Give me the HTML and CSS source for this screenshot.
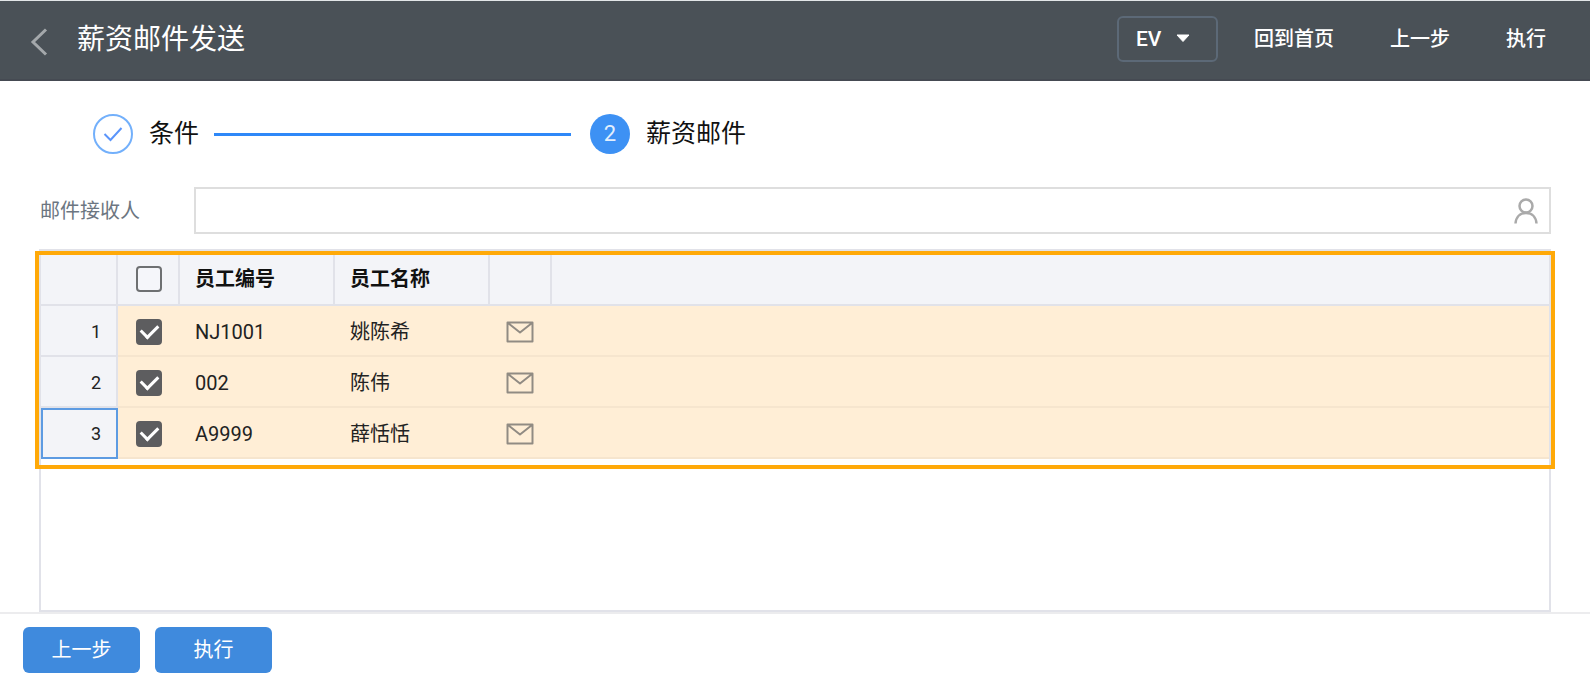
FILE: index.html
```html
<!DOCTYPE html>
<html lang="zh-CN">
<head>
<meta charset="utf-8">
<meta name="viewport" content="width=device-width, initial-scale=1">
<title>薪资邮件发送</title>
<link rel="stylesheet" href="styles.css">
</head>
<body>
<svg class="sprite" aria-hidden="true">
  <symbol id="mail" viewBox="0 0 28 22"><path d="M1.500 1.500h25v19h-25zM2 2l12 9.500L26 2" fill="none" stroke="currentColor" stroke-width="2" stroke-linejoin="round"/></symbol>
</svg>
<header class="topbar">
  <button class="back" type="button" aria-label="返回">
    <svg width="18" height="28" viewBox="0 0 18 28"><path d="M16 1.500 3 14l13 12.500" fill="none" stroke="currentColor" stroke-width="3"/></svg>
  </button>
  <h1 class="title">薪资邮件发送</h1>
  <button class="env" type="button">EV
    <svg width="14" height="9" viewBox="0 0 14 9"><path d="M1 1h12L7 7.500z" fill="currentColor" stroke="currentColor" stroke-linejoin="round"/></svg>
  </button>
  <nav class="actions">
    <a href="#">回到首页</a>
    <a href="#">上一步</a>
    <a href="#">执行</a>
  </nav>
</header>
<main class="content">
  <ol class="steps">
    <li class="step">
      <span class="dot done"><svg width="20" height="16" viewBox="0 0 20 16"><path d="M1.500 8 7.500 14 18.500 2" fill="none" stroke="currentColor" stroke-width="2"/></svg></span>
      <span>条件</span>
    </li>
    <li class="line" aria-hidden="true"></li>
    <li class="step">
      <span class="dot current">2</span>
      <span>薪资邮件</span>
    </li>
  </ol>
  <div class="field">
    <label for="receiver">邮件接收人</label>
    <div class="picker">
      <input id="receiver" type="text">
      <svg class="person" width="24" height="26" viewBox="0 0 24 26"><g fill="none" stroke="currentColor" stroke-width="2.500"><circle cx="12" cy="8" r="6.500"/><path d="M1.500 25.500C2 19 6 15 12 15s10 4 10.500 10.500"/></g></svg>
    </div>
  </div>
  <div class="grid">
    <table>
      <colgroup><col class="c-num"><col class="c-small"><col class="c-text"><col class="c-text"><col class="c-small"><col></colgroup>
      <thead>
        <tr><th></th><th class="pick"><input type="checkbox" aria-label="全选"></th><th>员工编号</th><th>员工名称</th><th></th><th></th></tr>
      </thead>
      <tbody>
        <tr><td class="num">1</td><td class="pick"><input type="checkbox" aria-label="选择 1" checked></td><td>NJ1001</td><td>姚陈希</td><td><svg class="mail"><use href="#mail"/></svg></td><td></td></tr>
        <tr><td class="num">2</td><td class="pick"><input type="checkbox" aria-label="选择 2" checked></td><td>002</td><td>陈伟</td><td><svg class="mail"><use href="#mail"/></svg></td><td></td></tr>
        <tr><td class="num focused">3</td><td class="pick"><input type="checkbox" aria-label="选择 3" checked></td><td>A9999</td><td>薛恬恬</td><td><svg class="mail"><use href="#mail"/></svg></td><td></td></tr>
      </tbody>
    </table>
    <div class="highlight"></div>
  </div>
</main>
<footer class="footer">
  <button type="button">上一步</button>
  <button type="button">执行</button>
</footer>
</body>
</html>
```

FILE: styles.css
```css
* { box-sizing: border-box; }

body {
  margin: 0;
  min-height: 100vh;
  display: flex;
  flex-direction: column;
  background: #fff;
  color: #222;
  font: 20px/28px Roboto, "Noto Sans CJK SC", sans-serif;
}

button, input { font: inherit; }
button { cursor: pointer; }
.sprite { display: none; }

.topbar {
  display: flex;
  align-items: center;
  height: 81px;
  padding: 0 44px 3px 30px;
  background: #4a5157;
  border-top: 1px solid #e2e6e8;
  border-bottom: 2px solid #454a52;
  color: #fff;
}

.back {
  display: flex;
  margin-top: 6px;
  padding: 0;
  border: 0;
  background: none;
  color: #a4a8ab;
}

.title {
  margin: 0 auto 0 29px;
  padding-top: 3px;
  font-size: 28px;
  line-height: 40px;
  font-weight: 400;
}

.env {
  display: flex;
  align-items: center;
  gap: 15px;
  width: 101px;
  height: 46px;
  padding: 0 0 0 17px;
  border: 2px solid #5c6977;
  border-radius: 6px;
  background: none;
  color: #fff;
  font-size: 21px;
  font-weight: 500;
}

.actions {
  display: flex;
  gap: 56px;
  margin-left: 36px;
}

.actions a {
  color: #fff;
  font-weight: 500;
  text-decoration: none;
}

.content {
  flex: 1;
  display: flex;
  flex-direction: column;
  padding: 33px 39px 0;
}

.steps {
  display: flex;
  align-items: center;
  margin: 0 0 33px;
  padding: 0 0 0 54px;
  list-style: none;
}

.step {
  display: flex;
  align-items: center;
  gap: 16px;
  color: #111;
  font-size: 25px;
  line-height: 40px;
}

.dot {
  display: flex;
  align-items: center;
  justify-content: center;
  width: 40px;
  height: 40px;
  border-radius: 50%;
  font-size: 22px;
}

.done { border: 2px solid #73b0fb; color: #5b95fb; }
.current { background: #3d91f4; color: #e3effd; }

.line {
  width: 357px;
  height: 3px;
  margin: 0 19px 0 15px;
  background: #2e88f8;
}

.field {
  display: flex;
  align-items: center;
  margin-bottom: 15px;
}

.field label {
  width: 155px;
  padding-left: 1px;
  color: #6c7681;
}

.picker {
  flex: 1;
  display: flex;
  align-items: center;
  height: 47px;
  padding-right: 11px;
  border: 2px solid #dedede;
}

.picker input {
  flex: 1;
  min-width: 0;
  height: 100%;
  border: 0;
  outline: 0;
  background: none;
}

.person { color: #aaa; }

.grid {
  position: relative;
  flex: 1;
  border: 2px solid #e1e2e9;
}

table {
  width: 100%;
  table-layout: fixed;
  border-collapse: separate;
  border-spacing: 0;
}

.c-num { width: 77px; }
.c-small { width: 62px; }
.c-text { width: 155px; }

th, td {
  height: 51px;
  padding: 2px 0 0 15px;
  text-align: left;
}

th {
  height: 55px;
  background: #f3f4f8;
  border-right: 2px solid #e1e2e9;
  border-bottom: 2px solid #e1e2e9;
  color: #111;
  font-weight: 700;
}

th:last-child { border-right: 0; }

td {
  background: #ffeed6;
  border-bottom: 2px solid #f6e5ce;
}

.num {
  padding: 2px 15px 0 0;
  background: #f3f4f8;
  border-right: 2px solid #e1e2e9;
  border-bottom-color: #e1e2e9;
  text-align: right;
  font-size: 18px;
}

.num.focused {
  padding-top: 0;
  border: 2px solid #5d9be2;
}

.pick { padding-left: 18px; }

.pick input {
  appearance: none;
  display: block;
  width: 26px;
  height: 26px;
  margin: 0;
  border: 2px solid #6e7072;
  border-radius: 4px;
  background: #f5f6fa;
}

.pick input:checked {
  display: grid;
  place-items: center;
  border-color: #5d5d5f;
  background: #5d5d5f;
}

.pick input:checked::before {
  content: "";
  width: 14px;
  height: 8px;
  margin-bottom: 4px;
  border: solid #fff;
  border-width: 0 0 3px 3px;
  rotate: -45deg;
}

.mail {
  display: block;
  width: 28px;
  height: 22px;
  margin-left: 1px;
  color: #918b83;
}

.highlight {
  position: absolute;
  inset: 0 -6px auto;
  height: 218px;
  border: 4px solid #ffa908;
  pointer-events: none;
}

.footer {
  display: flex;
  gap: 15px;
  padding: 13px 23px 14px;
  border-top: 2px solid #ececee;
}

.footer button {
  width: 117px;
  height: 46px;
  padding: 0;
  border: 0;
  border-radius: 6px;
  background: #3f8add;
  color: #fff;
}
```
